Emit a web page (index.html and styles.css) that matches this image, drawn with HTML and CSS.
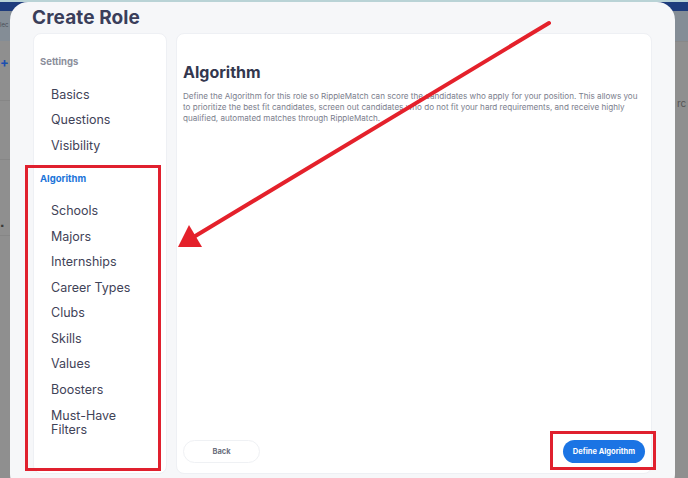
FILE: index.html
```html
<!DOCTYPE html>
<html lang="en">
<head>
<meta charset="utf-8">
<title>Create Role</title>
<link rel="stylesheet" href="styles.css">
</head>
<body>
<div class="app">
  <div class="app-topline"></div>
  <div class="app-nav"></div>
  <div class="app-sub">
    <span class="app-sub-left">lec</span>
  </div>
  <div class="app-body">
    <div class="app-left">
      <span class="app-plus">+</span>
      <span class="app-line l1"></span>
      <span class="app-line l2"></span>
      <span class="app-mark">▪</span>
      <span class="app-line l3"></span>
    </div>
    <div class="app-right">
      <span class="app-rc">rc</span>
    </div>
  </div>
</div>

<div class="modal">
  <h1 class="modal-title">Create Role</h1>
  <div class="modal-grid">
    <nav class="sidebar">
      <div class="side-label">Settings</div>
      <ul class="side-list">
        <li>Basics</li>
        <li>Questions</li>
        <li>Visibility</li>
      </ul>
      <div class="side-label active">Algorithm</div>
      <ul class="side-list alg">
        <li>Schools</li>
        <li>Majors</li>
        <li>Internships</li>
        <li>Career Types</li>
        <li>Clubs</li>
        <li>Skills</li>
        <li>Values</li>
        <li>Boosters</li>
        <li class="last">Must-Have<br>Filters</li>
      </ul>
    </nav>
    <section class="main">
      <h2 class="main-title">Algorithm</h2>
      <p class="main-text">Define the Algorithm for this role so RippleMatch can score the candidates who apply for your position. This allows you<br>to prioritize the best fit candidates, screen out candidates who do not fit your hard requirements, and receive highly<br>qualified, automated matches through RippleMatch.</p>
      <div class="actions">
        <button class="btn btn-back">Back</button>
        <button class="btn btn-primary">Define Algorithm</button>
      </div>
    </section>
  </div>
  <div class="hl hl-side"></div>
  <div class="hl hl-btn"></div>
</div>

<svg class="arrow" width="688" height="478" viewBox="0 0 688 478">
  <line x1="549" y1="23" x2="192" y2="238" stroke="#e4212b" stroke-width="4" stroke-linecap="round"/>
  <polygon points="178,247 189,225 202,247" fill="#e4212b"/>
</svg>
</body>
</html>
```
FILE: styles.css
```css
* { box-sizing: border-box; }
html, body { margin: 0; padding: 0; }
body {
  width: 688px;
  height: 478px;
  overflow: hidden;
  position: relative;
  background: #8f8f8f;
  font-family: "Inter", "Noto Sans", sans-serif;
}
.app { display: flex; flex-direction: column; height: 478px; }
.app-topline { height: 2px; background: #b9d3d6; }
.app-nav { height: 9px; background: #1e3c7c; }
.app-sub { height: 30px; background: #848d96; position: relative; }
.app-sub-left { position: absolute; left: 0; top: 10px; font-size: 6px; color: #4a4f57; }
.app-body { flex: 1; display: flex; justify-content: space-between; }
.app-left { width: 10px; position: relative; }
.app-plus { position: absolute; left: 0; top: 14px; color: #1c4fb0; font-size: 13px; font-weight: 700; line-height: 14px; }
.app-line { position: absolute; left: 0; width: 10px; height: 1px; background: #868686; }
.l1 { top: 59px; }
.l2 { top: 118px; }
.l3 { top: 194px; }
.app-mark { position: absolute; left: 0; top: 180px; color: #3a3a3a; font-size: 8px; line-height: 8px; }
.app-right { width: 13px; position: relative; border-top: 1px solid #888; }
.app-rc { position: absolute; left: 2px; top: 55px; font-size: 10px; color: #555; line-height: 12px; }

.modal {
  position: absolute;
  left: 10px;
  top: 2px;
  width: 665px;
  height: 490px;
  border-radius: 18px;
  background: #f6f7f9;
  padding: 4px 23px 0 23px;
}
.modal-title {
  margin: 0 0 3px -1px;
  font-size: 19px;
  line-height: 24px;
  font-weight: 700;
  color: #3a3e5a;
  letter-spacing: 0.1px;
}
.modal-grid {
  display: grid;
  grid-template-columns: 134px 476px;
  gap: 9px;
  height: 441px;
}
.sidebar {
  background: #fff;
  border-radius: 8px;
  border: 1px solid #eef0f4;
  padding: 21px 0 0 6px;
}
.side-label {
  font-size: 9.5px;
  line-height: 14px;
  font-weight: 700;
  color: #8b8e9b;
}
.side-label.active { color: #1b74d9; margin-top: 13px; }
.side-list {
  list-style: none;
  margin: 13px 0 0 0;
  padding: 0 0 0 11px;
}
.side-list.alg { margin-top: 13px; }
.side-list li {
  font-size: 12.5px;
  line-height: 14px;
  padding: 5.75px 0;
  color: #3f4358;
}
.side-list li.last { margin-top: 0.5px; }
.main {
  background: #fff;
  border-radius: 8px;
  border: 1px solid #eef0f4;
  padding: 28px 6px 10px 6px;
  display: flex;
  flex-direction: column;
}
.main-title {
  margin: 0;
  font-size: 16px;
  line-height: 20px;
  font-weight: 700;
  color: #33374e;
}
.main-text {
  margin: 8.5px 0 0 0;
  font-size: 8.1px;
  line-height: 11px;
  color: #7b7e8d;
  white-space: nowrap;
}
.actions {
  margin-top: auto;
  display: flex;
  justify-content: space-between;
  align-items: center;
}
.btn {
  height: 23px;
  border-radius: 12px;
  font-family: inherit;
  font-size: 7.5px;
  font-weight: 700;
  padding: 0;
  cursor: pointer;
}
.btn-back {
  width: 77px;
  background: #fff;
  border: 1px solid #eff1f4;
  color: #6c6f7e;
}
.btn-primary {
  width: 82px;
  background: #1b74e4;
  border: none;
  color: #fff;
}
.hl {
  position: absolute;
  border: 3px solid #e0202e;
}
.hl-side { left: 15px; top: 163px; width: 136px; height: 306px; }
.hl-btn { left: 540px; top: 429px; width: 106px; height: 39px; }
.arrow { position: absolute; left: 0; top: 0; pointer-events: none; }
```
